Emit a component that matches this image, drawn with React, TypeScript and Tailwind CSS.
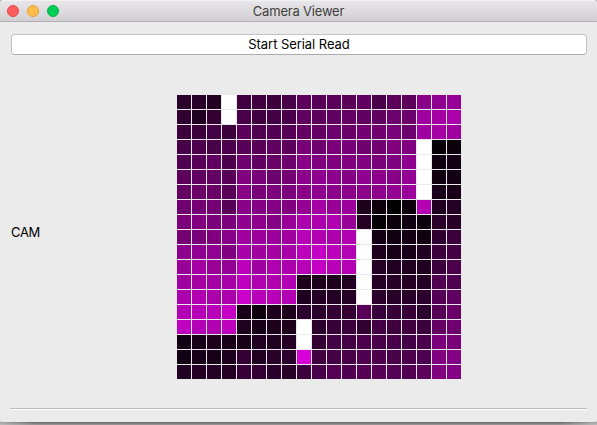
// Camera intensities, one byte per pixel in hex; "ff" is a saturated (white) pixel.
const FRAME = [
  "28 28 22 ff 40 40 3c 48 5c 58 5a 58 60 48 5a 5c 88 90 98",
  "30 20 34 ff 48 40 44 48 60 5c 60 64 60 60 6c 6c a0 a4 ac",
  "3c 3c 44 3c 5c 50 54 54 64 64 6c 68 74 70 78 6c a0 a4 a0",
  "48 4c 48 4c 58 58 60 5c 7a 70 7c 78 70 70 80 80 ff 08 0c",
  "50 58 60 4c 6c 60 68 6c 88 80 80 80 80 78 80 90 ff 0e 14",
  "5c 60 64 58 80 78 6c 74 8c 90 8c 84 90 8c 88 94 ff 10 14",
  "64 68 68 58 88 78 7c 7c 8c 90 8c 8c 8c 8c 94 9c ff 18 18",
  "70 74 74 58 88 84 84 80 94 a4 98 9c 1c 0c 00 0c b4 20 24",
  "7c 80 7c 7c 90 8c 84 98 ac ac b0 98 24 04 0c 10 0c 28 28",
  "74 78 80 88 a0 9c 9c a0 b8 b0 ac b0 ff 14 10 14 10 30 3c",
  "8c 90 90 80 a8 a0 a4 a8 bc c4 bc b4 ff 1c 18 18 20 3c 44",
  "98 a4 98 94 bc a0 b0 ac b8 c4 b8 b4 ff 24 20 20 20 3c 4c",
  "a0 a4 a4 a8 c0 b0 b0 b4 1c 1c 1c 20 ff 24 28 24 24 50 50",
  "ac b0 ac ac cc b8 b8 b4 20 24 24 24 ff 2c 28 28 2c 54 60",
  "b4 b8 b8 c4 18 0c 1c 1c 2c 2c 34 34 58 38 38 38 2c 54 68",
  "c0 b4 b0 bc 20 18 1c 1c ff 2c 38 3c 30 44 40 40 3c 64 70",
  "14 18 1c 18 18 20 20 24 ff 34 44 44 4c 48 48 44 4c 7c 78",
  "14 18 18 1c 34 20 28 2c d8 40 44 48 50 4c 48 4c 50 80 84",
  "20 24 24 24 38 34 2c 28 3c 48 54 50 54 58 54 50 5c 80 84",
].map((row) => row.split(" "));

function CameraGrid() {
  return (
    <div className="grid grid-cols-[repeat(19,14px)] auto-rows-[14px] gap-px">
      {FRAME.flatMap((row, y) =>
        row.map((v, x) => (
          <div key={`${y}-${x}`} style={{ backgroundColor: v === "ff" ? "#ffffff" : `#${v}00${v}` }} />
        )),
      )}
    </div>
  );
}

function TitleBar() {
  return (
    <header className="grid h-[22px] shrink-0 grid-cols-[1fr_auto_1fr] items-center rounded-t-[4px] border-t border-b border-t-[#f3f2f3] border-b-[#b1afb1] bg-linear-to-b from-[#e8e6e8] to-[#d2d0d2]">
      <div className="flex gap-2 pl-[7px]">
        <span className="size-3 rounded-full border border-[#e2474a] bg-[#ff5f5c]" />
        <span className="size-3 rounded-full border border-[#e1a03c] bg-[#ffbd4c]" />
        <span className="size-3 rounded-full border border-[#00b14c] bg-[#00ce56]" />
      </div>
      <h1 className="text-[13px] leading-5 tracking-[-0.2px] whitespace-nowrap text-[#403e40]">Camera Viewer</h1>
      <span />
    </header>
  );
}

export default function App() {
  return (
    <div className="flex h-[425px] w-[597px] flex-col overflow-hidden bg-[#b4b4b4] font-['Inter','Liberation_Sans',sans-serif]">
      <main className="flex h-[422px] shrink-0 flex-col rounded-t-[4px] rounded-b-[2px] bg-[#ebebeb]">
        <TitleBar />
        <div className="flex flex-1 flex-col px-[10px] pt-3">
          <button className="ml-px h-[21px] shrink-0 rounded-[4px] border border-[#c2c2c2] border-b-[#acacac] bg-white text-[13px] leading-[19px] tracking-[-0.06px] text-black">
            Start Serial Read
          </button>
          <div className="flex h-[353px] items-center">
            <span className="w-[167px] pl-px text-[13px] leading-4 tracking-[-0.3px] text-black">CAM</span>
            <div className="pt-[11px]">
              <CameraGrid />
            </div>
          </div>
          <div className="h-[2px] shrink-0 border-t border-[#bcbcbc] bg-white" />
        </div>
      </main>
      <div className="flex h-[3px] shrink-0 flex-col">
        <div className="h-px bg-[linear-gradient(to_right,#a8a8a8,#707070_6%,#707070_94%,#a8a8a8)]" />
        <div className="h-px bg-[linear-gradient(to_right,#b0b0b0,#828080_6%,#828080_94%,#b0b0b0)]" />
        <div className="h-px bg-[linear-gradient(to_right,#b8b8b8,#949292_6%,#949292_94%,#b8b8b8)]" />
      </div>
    </div>
  );
}
